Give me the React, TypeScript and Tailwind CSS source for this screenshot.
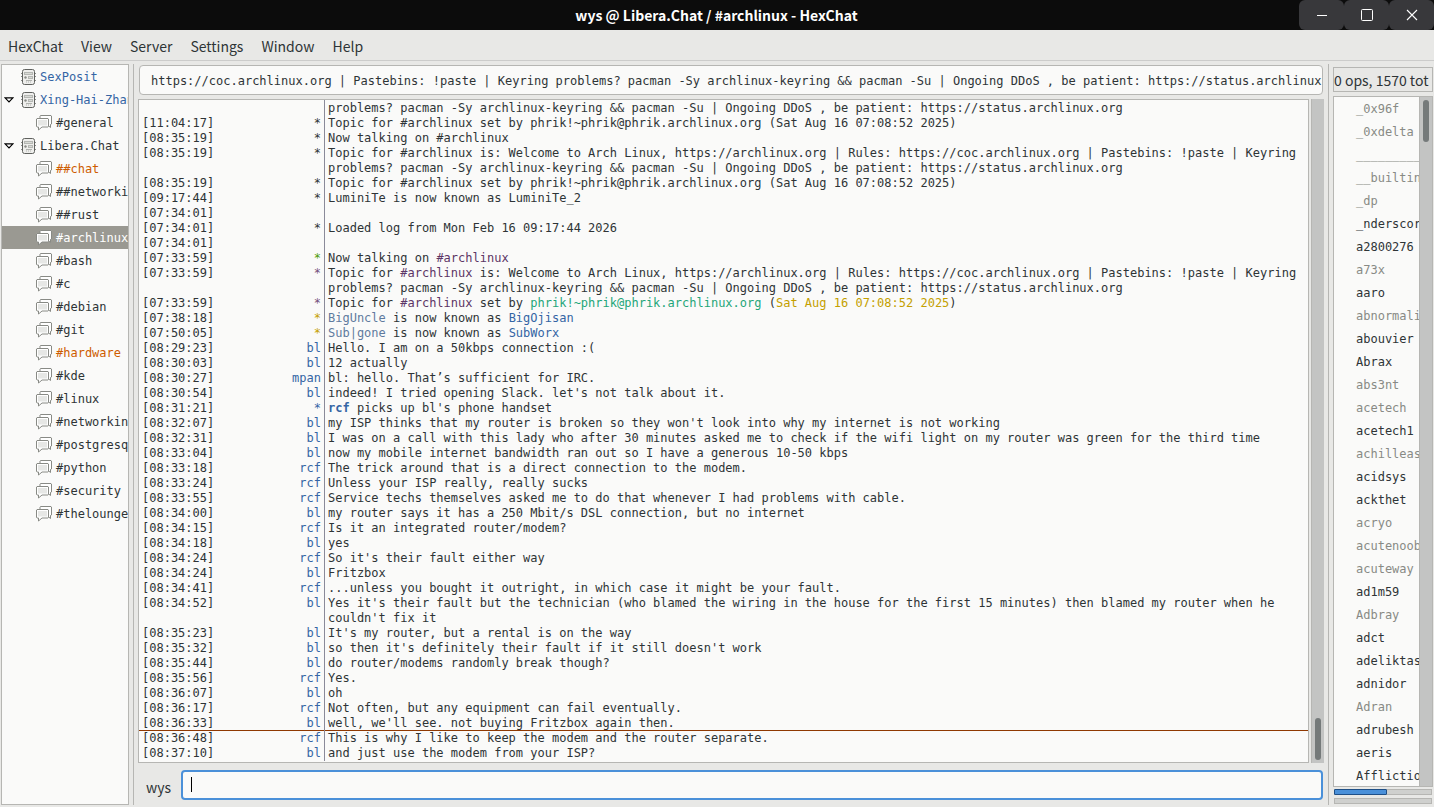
import React from "react";

type Tone = "text" | "unread" | "alert" | "selected";

const UI = "font-['Noto_Sans_CJK_SC','Noto_Sans',sans-serif]";

const toneClass: Record<Tone, string> = {
  text: "text-[#2e3436]",
  unread: "text-[#3465a4]",
  alert: "text-[#ce5c00]",
  selected: "bg-[#9a9992] text-white",
};

const networks: { name: string; tone: Tone; channels: { name: string; tone: Tone }[] }[] = [
  { name: "SexPosit", tone: "unread", channels: [] },
  { name: "Xing-Hai-Zhan", tone: "unread", channels: [{ name: "#general", tone: "text" }] },
  {
    name: "Libera.Chat",
    tone: "text",
    channels: [
      { name: "##chat", tone: "alert" },
      { name: "##networkin", tone: "text" },
      { name: "##rust", tone: "text" },
      { name: "#archlinux", tone: "selected" },
      { name: "#bash", tone: "text" },
      { name: "#c", tone: "text" },
      { name: "#debian", tone: "text" },
      { name: "#git", tone: "text" },
      { name: "#hardware", tone: "alert" },
      { name: "#kde", tone: "text" },
      { name: "#linux", tone: "text" },
      { name: "#networking", tone: "text" },
      { name: "#postgresql", tone: "text" },
      { name: "#python", tone: "text" },
      { name: "#security", tone: "text" },
      { name: "#thelounge", tone: "text" },
    ],
  },
];

const users: [string, boolean][] = [
  ["_0x96f", true],
  ["_0xdelta", true],
  ["_________", true],
  ["__builtin", true],
  ["_dp", true],
  ["_nderscor", false],
  ["a2800276", false],
  ["a73x", true],
  ["aaro", false],
  ["abnormali", true],
  ["abouvier", false],
  ["Abrax", false],
  ["abs3nt", true],
  ["acetech", true],
  ["acetech1", false],
  ["achilleas", true],
  ["acidsys", false],
  ["ackthet", false],
  ["acryo", true],
  ["acutenoob", true],
  ["acuteway", true],
  ["ad1m59", false],
  ["Adbray", true],
  ["adct", false],
  ["adeliktas", false],
  ["adnidor", false],
  ["Adran", true],
  ["adrubesh", false],
  ["aeris", false],
  ["Afflictio", false],
];

const topicTail =
  "https://coc.archlinux.org | Pastebins: !paste | Keyring problems? pacman -Sy archlinux-keyring && pacman -Su | Ongoing DDoS , be patient: https://status.archlinux.org";

const welcome =
  " is: Welcome to Arch Linux, https://archlinux.org | Rules: https://coc.archlinux.org | Pastebins: !paste | Keyring problems? pacman -Sy archlinux-keyring && pacman -Su | Ongoing DDoS , be patient: https://status.archlinux.org";

const Chan = () => <span className="text-[#5c3566]">#archlinux</span>;
const Dim = ({ children }: { children: React.ReactNode }) => <span className="text-[#5f7a9e]">{children}</span>;
const Nick = ({ children }: { children: React.ReactNode }) => <span className="text-[#3465a4]">{children}</span>;

interface Line {
  time: string;
  who: string;
  body: React.ReactNode;
  whoClass?: string;
  marker?: boolean;
}

const log: Line[] = [
  { time: "", who: "", body: "problems? pacman -Sy archlinux-keyring && pacman -Su | Ongoing DDoS , be patient: https://status.archlinux.org" },
  { time: "[11:04:17]", who: "*", whoClass: "text-[#2e3436]", body: "Topic for #archlinux set by phrik!~phrik@phrik.archlinux.org (Sat Aug 16 07:08:52 2025)" },
  { time: "[08:35:19]", who: "*", whoClass: "text-[#2e3436]", body: "Now talking on #archlinux" },
  { time: "[08:35:19]", who: "*", whoClass: "text-[#2e3436]", body: "Topic for #archlinux" + welcome },
  { time: "[08:35:19]", who: "*", whoClass: "text-[#2e3436]", body: "Topic for #archlinux set by phrik!~phrik@phrik.archlinux.org (Sat Aug 16 07:08:52 2025)" },
  { time: "[09:17:44]", who: "*", whoClass: "text-[#2e3436]", body: "LuminiTe is now known as LuminiTe_2" },
  { time: "[07:34:01]", who: "", body: "" },
  { time: "[07:34:01]", who: "*", whoClass: "text-[#2e3436]", body: "Loaded log from Mon Feb 16 09:17:44 2026" },
  { time: "[07:34:01]", who: "", body: "" },
  { time: "[07:33:59]", who: "*", whoClass: "text-[#4e9a06]", body: <>Now talking on <Chan /></> },
  { time: "[07:33:59]", who: "*", whoClass: "text-[#75507b]", body: <>Topic for <Chan />{welcome}</> },
  {
    time: "[07:33:59]",
    who: "*",
    whoClass: "text-[#75507b]",
    body: (
      <>
        Topic for <Chan /> set by <span className="text-[#1fa67a]">phrik!~phrik@phrik.archlinux.org</span> (
        <span className="text-[#c4a000]">Sat Aug 16 07:08:52 2025</span>)
      </>
    ),
  },
  { time: "[07:38:18]", who: "*", whoClass: "text-[#c4a000]", body: <><Dim>BigUncle</Dim> is now known as <Nick>BigOjisan</Nick></> },
  { time: "[07:50:05]", who: "*", whoClass: "text-[#c4a000]", body: <><Dim>Sub|gone</Dim> is now known as <Nick>SubWorx</Nick></> },
  { time: "[08:29:23]", who: "bl", body: "Hello. I am on a 50kbps connection :(" },
  { time: "[08:30:03]", who: "bl", body: "12 actually" },
  { time: "[08:30:27]", who: "mpan", body: "bl: hello. That’s sufficient for IRC." },
  { time: "[08:30:54]", who: "bl", body: "indeed! I tried opening Slack. let's not talk about it." },
  { time: "[08:31:21]", who: "*", body: <><b className="text-[#3465a4]">rcf</b> picks up bl's phone handset</> },
  { time: "[08:32:07]", who: "bl", body: "my ISP thinks that my router is broken so they won't look into why my internet is not working" },
  { time: "[08:32:31]", who: "bl", body: "I was on a call with this lady who after 30 minutes asked me to check if the wifi light on my router was green for the third time" },
  { time: "[08:33:04]", who: "bl", body: "now my mobile internet bandwidth ran out so I have a generous 10-50 kbps" },
  { time: "[08:33:18]", who: "rcf", body: "The trick around that is a direct connection to the modem." },
  { time: "[08:33:24]", who: "rcf", body: "Unless your ISP really, really sucks" },
  { time: "[08:33:55]", who: "rcf", body: "Service techs themselves asked me to do that whenever I had problems with cable." },
  { time: "[08:34:00]", who: "bl", body: "my router says it has a 250 Mbit/s DSL connection, but no internet" },
  { time: "[08:34:15]", who: "rcf", body: "Is it an integrated router/modem?" },
  { time: "[08:34:18]", who: "bl", body: "yes" },
  { time: "[08:34:24]", who: "rcf", body: "So it's their fault either way" },
  { time: "[08:34:24]", who: "bl", body: "Fritzbox" },
  { time: "[08:34:41]", who: "rcf", body: "...unless you bought it outright, in which case it might be your fault." },
  { time: "[08:34:52]", who: "bl", body: "Yes it's their fault but the technician (who blamed the wiring in the house for the first 15 minutes) then blamed my router when he couldn't fix it" },
  { time: "[08:35:23]", who: "bl", body: "It's my router, but a rental is on the way" },
  { time: "[08:35:32]", who: "bl", body: "so then it's definitely their fault if it still doesn't work" },
  { time: "[08:35:44]", who: "bl", body: "do router/modems randomly break though?" },
  { time: "[08:35:56]", who: "rcf", body: "Yes." },
  { time: "[08:36:07]", who: "bl", body: "oh" },
  { time: "[08:36:17]", who: "rcf", body: "Not often, but any equipment can fail eventually." },
  { time: "[08:36:33]", who: "bl", body: "well, we'll see. not buying Fritzbox again then." },
  { time: "[08:36:48]", who: "rcf", body: "This is why I like to keep the modem and the router separate.", marker: true },
  { time: "[08:37:10]", who: "bl", body: "and just use the modem from your ISP?" },
];

function ServerIcon() {
  return (
    <svg width="16" height="16" viewBox="0 0 16 16" className="shrink-0" aria-hidden="true">
      <path d="M0 4.5h1M0 7.500h1M0 11.500h1M14 4.500h1M14 7.500h1M14 11.500h1" stroke="#8b8d8b" />
      <path d="M3.500.5h8q2 0 2 2v11q0 2-2 2h-8q-2 0-2-2v-11q0-2 2-2z" fill="#eeeeec" stroke="#5f615e" />
      <rect x="3.500" y="3.500" width="8" height="2" fill="#d8dad6" stroke="#b5b7b3" />
      <rect x="7.500" y="7.500" width="4" height="2" fill="#d8dad6" stroke="#b5b7b3" />
      <circle cx="4.500" cy="8.500" r="1.200" fill="#888a85" />
      <path d="M5 13h1M7 13h1M9 13h1M5 11.500h6" stroke="#b0b2ae" />
    </svg>
  );
}

function ChannelIcon() {
  return (
    <svg width="17" height="16" viewBox="0 0 17 16" className="shrink-0" aria-hidden="true">
      <path d="M4.500.5h10.500l.5.5v8l-.5.5h-.500v3l-3-2.500H4.500l-.5-.5V1z" fill="#fff" stroke="#888a85" />
      <path d="M1 3.500h11l.5.5v7.500l-.5.5H6l-3.500 3v-3H1l-.5-.5V4z" fill="#fff" stroke="#888a85" />
      <rect x="2" y="5" width="9" height="5.500" fill="#e6e7e5" />
    </svg>
  );
}

function Expander() {
  return (
    <svg width="10" height="6" viewBox="0 0 10 6" aria-hidden="true">
      <path d="M1 .8h8L5 5z" fill="#fff" stroke="#000" strokeWidth="1.200" />
    </svg>
  );
}

const winBtn = "flex h-[30px] w-[45px] items-center justify-center rounded-md bg-[#38383b]";

export default function App() {
  return (
    <div className="flex h-screen flex-col overflow-hidden bg-[#e8e8e6] font-['DejaVu_Sans_Mono',monospace] text-[12px] leading-[15px] text-[#2e3436]">
      <header className="flex h-[30px] shrink-0 items-center bg-[#0c0c0c]">
        <h1 className={`${UI} flex-1 pl-[134px] text-center text-[14px] leading-5 font-bold text-white`}>
          wys @ Libera.Chat / #archlinux - HexChat
        </h1>
        <button aria-label="Minimize" className={winBtn}>
          <svg width="12" height="12" viewBox="0 0 12 12"><path d="M1 6.500h10" stroke="#fff" /></svg>
        </button>
        <button aria-label="Maximize" className={winBtn}>
          <svg width="12" height="12" viewBox="0 0 12 12"><rect x=".5" y=".5" width="11" height="11" rx="1" fill="none" stroke="#fff" /></svg>
        </button>
        <button aria-label="Close" className={winBtn}>
          <svg width="12" height="12" viewBox="0 0 12 12"><path d="M1 1l10 10M11 1L1 11" stroke="#fff" strokeWidth="1.100" /></svg>
        </button>
      </header>

      <nav className={`${UI} flex h-[31px] shrink-0 items-center gap-[18px] border-b border-[#cccccb] px-2 pt-[2px] text-[14px] leading-5`}>
        {["HexChat", "View", "Server", "Settings", "Window", "Help"].map((m) => (
          <button key={m}>{m}</button>
        ))}
      </nav>

      <main className="flex min-h-0 flex-1 pt-[3px] pb-[2px]">
        <aside className="ml-px w-[128px] shrink-0 overflow-hidden border border-[#b6b6b3] bg-[#fafaf9]">
          <ul>
            {networks.map((n) => (
              <li key={n.name}>
                <button className={`flex h-[23px] w-full items-center whitespace-nowrap ${toneClass[n.tone]}`}>
                  <span className="flex w-[19px] shrink-0 pl-[2px]">{n.channels.length > 0 && <Expander />}</span>
                  <ServerIcon />
                  <span className="pt-[2px] pl-[3px]">{n.name}</span>
                </button>
                <ul>
                  {n.channels.map((c) => (
                    <li key={c.name}>
                      <button className={`flex h-[23px] w-full items-center pl-[34px] whitespace-nowrap ${toneClass[c.tone]}`}>
                        <ChannelIcon />
                        <span className="pt-[2px] pl-[3px]">{c.name}</span>
                      </button>
                    </li>
                  ))}
                </ul>
              </li>
            ))}
          </ul>
        </aside>

        <div className="ml-1 w-px shrink-0 bg-[#b6b6b3]" />

        <section className="ml-1 flex min-w-0 flex-1 flex-col">
          <input
            aria-label="Topic"
            defaultValue={topicTail}
            className="mt-px mr-[5px] ml-px h-[30px] shrink-0 rounded-[4px] border border-[#b6b6b3] bg-[#fafaf9] pt-px pr-0 pl-[11px] outline-none"
          />
          <div className="mt-1 flex min-h-0 flex-1">
            <ol className="min-w-0 flex-1 overflow-hidden border border-[#b6b6b3] bg-[#fafaf9]">
              {log.map((l, i) => (
                <li
                  key={i}
                  className={`flex min-h-[15px] ${i === 0 ? "h-4 items-end" : ""} ${l.marker ? "shadow-[0_-1px_0_#8f3902]" : ""}`}
                >
                  <span className="w-[80px] shrink-0 pl-[3px]">{l.time}</span>
                  <span
                    className={`w-[106px] shrink-0 self-stretch border-r border-[#8a8a99] pr-[3px] text-right ${l.whoClass ?? "text-[#3465a4]"}`}
                  >
                    {l.who}
                  </span>
                  <span className="min-w-0 flex-1 pr-1 pl-[3px]">{l.body}</span>
                </li>
              ))}
            </ol>
            <div className="mr-1 ml-[2px] flex w-[13px] shrink-0 flex-col justify-end border-l border-[#b6b6b3] bg-[#c3c4c3] px-[3px] pb-[3px]">
              <div className="h-[42px] rounded-full bg-[#757a7a]" />
            </div>
          </div>
          <div className="flex h-[42px] shrink-0 items-center gap-[10px] pt-[2px] pr-[5px] pl-2">
            <label htmlFor="message" className={`${UI} pt-1 text-[14px] leading-5`}>
              wys
            </label>
            <div className="relative flex min-w-0 flex-1">
              <input
                id="message"
                autoFocus
                defaultValue=""
                className="h-[30px] min-w-0 flex-1 rounded-[4px] border-2 border-[#4a90d9] bg-[#fafaf9] px-2 caret-transparent outline-none"
              />
              <span className="absolute top-[7px] left-[10px] h-[15px] w-px bg-[#000]" />
            </div>
          </div>
        </section>

        <div className="w-px shrink-0 bg-[#b6b6b3]" />

        <aside className="mr-px ml-1 flex w-[100px] shrink-0 flex-col pb-px">
          <div className={`${UI} mt-[3px] h-[25px] shrink-0 overflow-hidden border border-[#b6b6b3] text-[14px] leading-[25px] whitespace-nowrap`}>
            0 ops, 1570 tot
          </div>
          <div className="mt-1 flex min-h-0 flex-1 border border-[#b6b6b3] bg-[#fafaf9]">
            <ul className="min-w-0 flex-1 overflow-hidden">
              {users.map(([name, away]) => (
                <li key={name} className={`h-[23px] pl-[22px] leading-[25px] whitespace-nowrap ${away ? "text-[#888a85]" : ""}`}>
                  {name}
                </li>
              ))}
            </ul>
            <div className="w-[13px] shrink-0 border-l border-[#b6b6b3] bg-[#c3c4c3] px-[3px] pt-[3px]">
              <div className="h-[42px] rounded-full bg-[#757a7a]" />
            </div>
          </div>
          <div className="mx-px mt-[2px] h-[6px] shrink-0 border border-[#b6b6b3] bg-[#cfd0ce]">
            <div className="-mt-px -ml-px h-[6px] w-[53px] rounded-[1px] border border-[#1f4f86] bg-[#4a90d9]" />
          </div>
          <div className="mx-px mt-[3px] h-[6px] shrink-0 border border-[#b6b6b3] bg-[#cfd0ce]" />
        </aside>
      </main>
    </div>
  );
}
